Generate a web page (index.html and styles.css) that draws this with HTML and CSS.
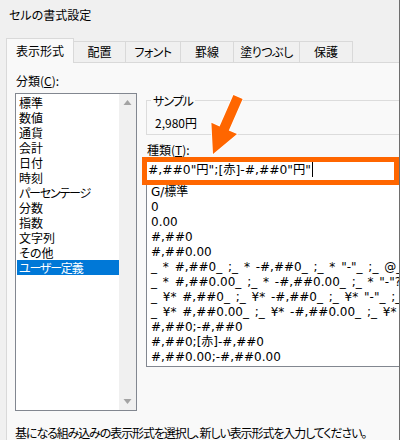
FILE: index.html
```html
<!DOCTYPE html>
<html lang="ja">
<head>
<meta charset="utf-8">
<link rel="stylesheet" href="styles.css">
</head>
<body>
<div class="window">
  <div class="title">セルの書式設定</div>
  <div class="tabs">
    <div class="tab active t1">表示形式</div>
    <div class="tab t2">配置</div>
    <div class="tab t3">フォント</div>
    <div class="tab t4">罫線</div>
    <div class="tab t5">塗りつぶし</div>
    <div class="tab t6">保護</div>
  </div>
  <div class="panel">
    <div class="cols">
      <div class="left">
        <div class="label cat-label">分類(<u>C</u>):</div>
        <div class="listbox">
          <div class="items">
            <div class="item">標準</div>
            <div class="item">数値</div>
            <div class="item">通貨</div>
            <div class="item">会計</div>
            <div class="item">日付</div>
            <div class="item">時刻</div>
            <div class="item kana">パーセンテージ</div>
            <div class="item">分数</div>
            <div class="item">指数</div>
            <div class="item">文字列</div>
            <div class="item">その他</div>
            <div class="item kana selected">ユーザー定義</div>
          </div>
          <div class="scrollbar">
            <svg class="sb-arrow" width="17" height="17" viewBox="0 0 17 17"><polygon points="4.5,11 12.5,11 8.5,6" fill="#a3a3a3"/></svg>
            <svg class="sb-arrow" width="17" height="17" viewBox="0 0 17 17"><polygon points="4.5,6 12.5,6 8.5,11" fill="#a3a3a3"/></svg>
          </div>
        </div>
      </div>
      <div class="right">
        <fieldset class="sample">
          <legend>サンプル</legend>
          <div class="sample-value">2,980円</div>
        </fieldset>
        <div class="label type-label">種類(<u>T</u>):</div>
        <div class="input">#,##0"円";[赤]-#,##0"円"<span class="caret"></span></div>
        <div class="codes">
          <div class="code">G/標準</div>
          <div class="code">0</div>
          <div class="code">0.00</div>
          <div class="code">#,##0</div>
          <div class="code">#,##0.00</div>
          <div class="code">_ * #,##0_ ;_ * -#,##0_ ;_ * "-"_ ;_ @_</div>
          <div class="code">_ * #,##0.00_ ;_ * -#,##0.00_ ;_ * "-"??_ ;_ @_</div>
          <div class="code">_ ¥* #,##0_ ;_ ¥* -#,##0_ ;_ ¥* "-"_ ;_ @_</div>
          <div class="code">_ ¥* #,##0.00_ ;_ ¥* -#,##0.00_ ;_ ¥* "-"??_ ;_ @_</div>
          <div class="code">#,##0;-#,##0</div>
          <div class="code">#,##0;[赤]-#,##0</div>
          <div class="code">#,##0.00;-#,##0.00</div>
        </div>
      </div>
    </div>
    <div class="hint">基になる組み込みの表示形式を選択し、新しい表示形式を入力してください。</div>
  </div>
  <svg class="arrow" width="50" height="72" viewBox="0 0 50 72">
    <polygon points="33.4,7 42.6,11 28.8,42.4 37,46 13,66 11.4,34.8 19.6,38.4" fill="#ff6600" stroke="#ffffff" stroke-width="1.5" stroke-linejoin="miter" paint-order="stroke"/>
  </svg>
</div>
</body>
</html>
```
FILE: styles.css
```css
html, body {
  margin: 0;
  padding: 0;
  background: #f0f0f0;
}
body {
  font-family: "Noto Sans CJK JP", sans-serif;
  font-size: 12px;
  color: #000;
  font-feature-settings: "palt";
}
.window {
  position: relative;
  width: 400px;
  height: 440px;
  box-sizing: border-box;
  border-right: 1px solid #6e6e6e;
  overflow: hidden;
  display: flex;
  flex-direction: column;
}
.title {
  height: 38px;
  box-sizing: border-box;
  padding: 7px 0 0 9px;
  line-height: 16px;
  font-size: 12px;
}
.tabs {
  display: flex;
  align-items: flex-end;
  height: 24px;
  padding-left: 6px;
}
.tab {
  box-sizing: border-box;
  height: 21px;
  border: 1px solid #d9d9d9;
  border-bottom: none;
  background: #f0f0f0;
  text-align: center;
  line-height: 20px;
  margin-left: -1px;
}
.tab.active {
  height: 25px;
  margin-bottom: -1px;
  margin-left: 0;
  background: #f9f9f9;
  line-height: 24px;
  position: relative;
  z-index: 1;
}
.t1 { width: 68px; }
.t2 { width: 53px; }
.t3 { width: 56px; letter-spacing: -0.5px; }
.t4 { width: 54px; }
.t5 { width: 67px; letter-spacing: -0.5px; }
.t6 { width: 54px; }
.panel {
  flex: 1;
  margin-left: 6px;
  border-left: 1px solid #d9d9d9;
  border-top: 1px solid #d9d9d9;
  background: #f9f9f9;
  padding-top: 10px;
  overflow: hidden;
}
.cols {
  display: flex;
  align-items: flex-start;
  gap: 9px;
  padding-left: 8px;
}
.label {
  line-height: 15px;
  padding-left: 1px;
}
.left {
  width: 122px;
  flex: none;
}
.listbox {
  margin-top: 5px;
  height: 318px;
  box-sizing: border-box;
  border: 1px solid #828790;
  background: #fff;
  display: flex;
}
.items {
  flex: 1;
  padding: 1px 0 0 1px;
}
.item {
  height: 15px;
  line-height: 15px;
  padding-left: 2px;
  white-space: nowrap;
}
.item.kana {
  letter-spacing: -1.2px;
}
.item.selected {
  background: #0078d7;
  color: #fff;
}
.scrollbar {
  width: 17px;
  flex: none;
  background: #f0f0f0;
  display: flex;
  flex-direction: column;
  justify-content: space-between;
}
.sb-arrow {
  display: block;
}
.right {
  width: 270px;
  flex: none;
}
.sample {
  margin: 20px 0 0 0;
  padding: 0;
  border: 1px solid #dcdcdc;
  min-width: 0;
}
.sample legend {
  margin-left: 4px;
  padding: 0 2px;
  line-height: 15px;
  letter-spacing: -1px;
}
.sample-value {
  padding: 7px 0 4px 8px;
  line-height: 15px;
}
.type-label {
  margin-top: 7px;
}
.input {
  margin-left: -4px;
  width: 257px;
  box-sizing: border-box;
  border: 5px solid #ff6600;
  background: #fff;
  height: 28px;
  line-height: 17px;
  padding-left: 1px;
  font-family: "DejaVu Sans", "Noto Sans CJK JP", sans-serif;
  font-size: 12.3px;
  font-feature-settings: normal;
  white-space: nowrap;
  position: relative;
  z-index: 1;
}
.caret {
  display: inline-block;
  width: 1px;
  height: 15px;
  background: #000;
  vertical-align: -3px;
  margin-left: 1px;
}
.codes {
  margin-top: -1px;
  box-sizing: border-box;
  height: 183px;
  border: 1px solid #828790;
  background: #fff;
  padding: 0 0 0 4px;
  font-family: "DejaVu Sans", "Noto Sans CJK JP", sans-serif;
  font-size: 12px;
  font-feature-settings: normal;
}
.code {
  height: 15px;
  line-height: 15px;
  white-space: nowrap;
  word-spacing: 2px;
}
.hint {
  margin-top: 14px;
  padding-left: 8px;
  line-height: 15px;
  white-space: nowrap;
  letter-spacing: -1.1px;
}
.arrow {
  position: absolute;
  left: 200px;
  top: 88px;
  z-index: 2;
}
```
